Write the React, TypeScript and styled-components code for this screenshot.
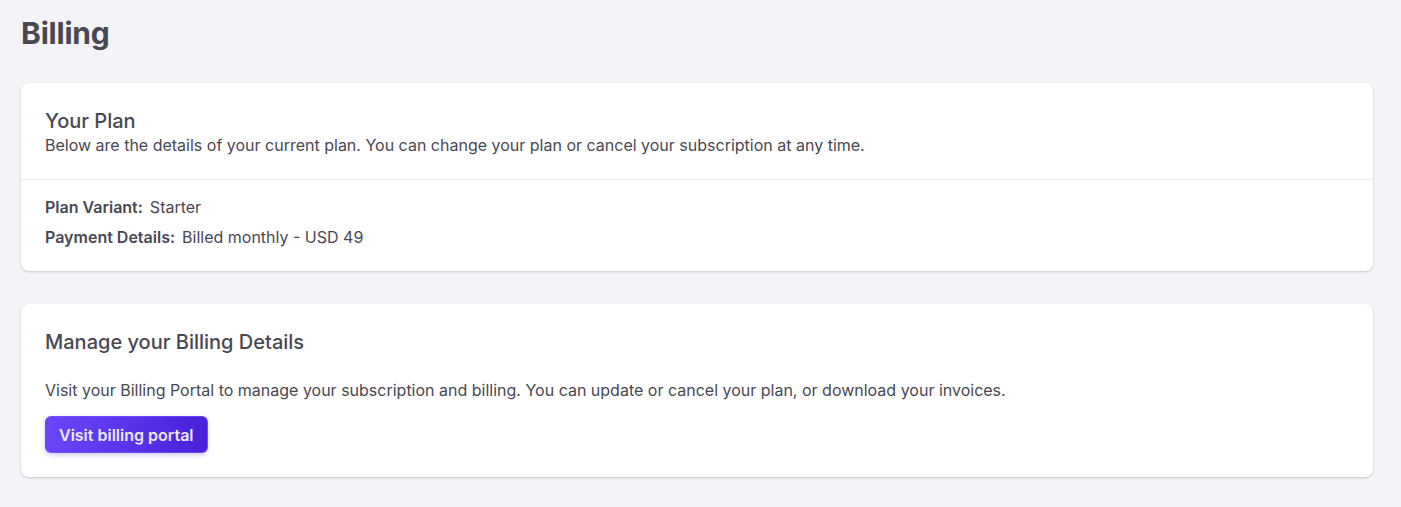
import React from 'react';
import styled, { createGlobalStyle } from 'styled-components';

const GlobalStyle = createGlobalStyle`
  html, body {
    margin: 0;
    padding: 0;
    background: #f4f4f8;
  }
  body {
    font-family: Inter, 'Noto Sans', 'Liberation Sans', sans-serif;
    color: #484852;
    -webkit-font-smoothing: antialiased;
  }
`;

const Page = styled.main`
  padding: 15px 28px 30px 21px;
  display: flex;
  flex-direction: column;
`;

const Title = styled.h1`
  margin: 0 0 32px;
  font-size: 30px;
  line-height: 36px;
  font-weight: 700;
  color: #484852;
  letter-spacing: -0.2px;
`;

const Stack = styled.div`
  display: flex;
  flex-direction: column;
  gap: 33px;
`;

const Card = styled.section`
  background: #ffffff;
  border-radius: 8px;
  box-shadow: 0 1px 3px rgba(30, 30, 60, 0.12), 0 1px 2px rgba(30, 30, 60, 0.1);
`;

const CardHeader = styled.div<{ divided?: boolean }>`
  padding: ${(p) => (p.divided ? '24px 24px 24px' : '24px 24px 0')};
  border-bottom: ${(p) => (p.divided ? '1px solid #ececf0' : 'none')};
`;

const CardTitle = styled.h2`
  margin: 0;
  font-size: 20px;
  line-height: 28px;
  font-weight: 500;
  color: #484852;
`;

const Text = styled.p`
  margin: 0;
  font-size: 16px;
  line-height: 20px;
  color: #484852;
`;

const CardBody = styled.div<{ gap: number; top: number; bottom: number }>`
  padding: ${(p) => p.top}px 24px ${(p) => p.bottom}px;
  display: flex;
  flex-direction: column;
  align-items: flex-start;
  gap: ${(p) => p.gap}px;
`;

const DetailRow = styled.div`
  display: flex;
  gap: 7px;
  font-size: 16px;
  line-height: 22px;
`;

const Label = styled.span`
  font-weight: 600;
`;

const PortalButton = styled.button`
  font-family: inherit;
  font-size: 16px;
  font-weight: 600;
  line-height: 20px;
  color: #ece8ff;
  padding: 0 13px;
  height: 37px;
  border-radius: 6px;
  border: 1px solid rgba(120, 90, 255, 0.6);
  background: linear-gradient(90deg, #6a46f8 0%, #4a20db 100%);
  box-shadow: 0 2px 5px rgba(80, 50, 220, 0.25);
  cursor: pointer;
`;

const App: React.FC = () => {
  return (
    <>
      <GlobalStyle />
      <Page>
        <Title>Billing</Title>
        <Stack>
          <Card>
            <CardHeader divided>
              <CardTitle>Your Plan</CardTitle>
              <Text>
                Below are the details of your current plan. You can change your plan or cancel your
                subscription at any time.
              </Text>
            </CardHeader>
            <CardBody gap={8} top={16} bottom={23}>
              <DetailRow>
                <Label>Plan Variant:</Label>
                <span>Starter</span>
              </DetailRow>
              <DetailRow>
                <Label>Payment Details:</Label>
                <span>Billed monthly - USD 49</span>
              </DetailRow>
            </CardBody>
          </Card>
          <Card>
            <CardHeader>
              <CardTitle>Manage your Billing Details</CardTitle>
            </CardHeader>
            <CardBody gap={16} top={24} bottom={24}>
              <Text>
                Visit your Billing Portal to manage your subscription and billing. You can update or
                cancel your plan, or download your invoices.
              </Text>
              <PortalButton>Visit billing portal</PortalButton>
            </CardBody>
          </Card>
        </Stack>
      </Page>
    </>
  );
};

export default App;
